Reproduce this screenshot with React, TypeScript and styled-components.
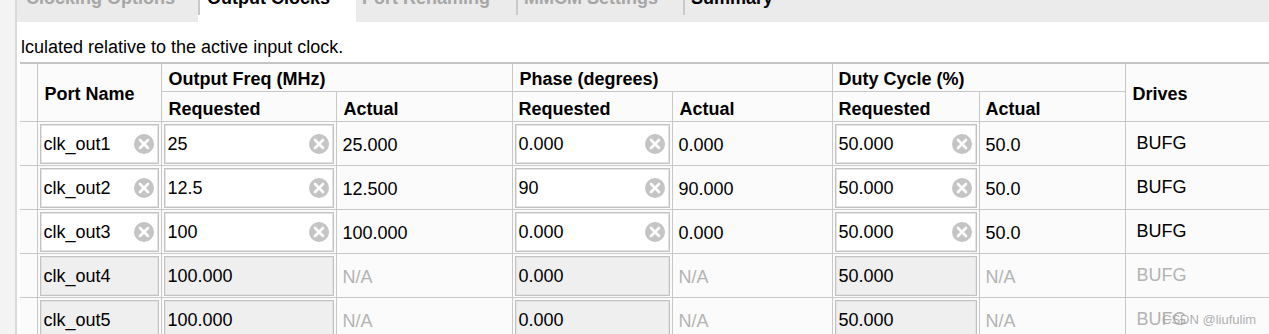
import React from "react";
import styled, { createGlobalStyle } from "styled-components";

const GlobalStyle = createGlobalStyle`
  html, body {
    margin: 0;
    padding: 0;
    background: #ffffff;
    overflow: hidden;
  }
  body {
    font-family: "Liberation Sans", Arial, sans-serif;
    color: #000;
  }
`;

const Page = styled.div`
  display: flex;
  height: 334px;
  width: 1269px;
  overflow: hidden;
`;

const Gutter = styled.div`
  flex: 0 0 15px;
  background: #f3f3f3;
  border-right: 2px solid #d9d9d9;
`;

const Main = styled.div`
  flex: 1;
  min-width: 0;
  overflow: hidden;
  display: flex;
  flex-direction: column;
`;

const TabBar = styled.div`
  display: flex;
  height: 22px;
  background: #ebebeb;
  overflow: hidden;
  flex: 0 0 22px;
`;

const Tab = styled.div<{ $w: number; $active?: boolean; $dark?: boolean; $sep?: boolean; $pl: number }>`
  position: relative;
  flex: 0 0 ${(p) => p.$w}px;
  box-sizing: border-box;
  padding-left: ${(p) => p.$pl}px;
  background: ${(p) => (p.$active ? "#ffffff" : "transparent")};
  font-size: 18px;
  font-weight: bold;
  line-height: 18px;
  white-space: nowrap;
  color: ${(p) => (p.$dark ? "#000000" : "#a6a6a6")};
  &::before {
    content: "";
    display: ${(p) => (p.$sep ? "block" : "none")};
    position: absolute;
    left: 0;
    top: 0;
    width: 2px;
    height: 15px;
    background: #c9c9c9;
  }
`;

const TabLabel = styled.span`
  display: block;
  margin-top: -11px;
`;

const Content = styled.div`
  padding-left: 3px;
  background: #ffffff;
  flex: 1;
`;

const Description = styled.div`
  margin-top: 14px;
  margin-bottom: 4px;
  height: 22px;
  line-height: 22px;
  font-size: 18px;
  padding-left: 1px;
  white-space: nowrap;
`;

const Table = styled.table`
  border-collapse: collapse;
  table-layout: fixed;
  width: 1265px;
  border-top: 2px solid #c4c4c4;
  font-size: 18px;
`;

const HeadRow = styled.tr<{ $h: number }>`
  height: ${(p) => p.$h}px;
`;

const HeadCell = styled.th<{ $pt?: number; $pl?: number }>`
  border: 1px solid #c8c8c8;
  border-top: none;
  background: #fbfbfb;
  text-align: left;
  vertical-align: middle;
  font-weight: bold;
  padding: ${(p) => p.$pt ?? 0}px 0 0 ${(p) => p.$pl ?? 7}px;
  white-space: nowrap;
  overflow: hidden;
  &:first-child {
    border-left: none;
  }
`;

const DataRow = styled.tr`
  height: 44px;
`;

const FieldCell = styled.td`
  border: 1px solid #c8c8c8;
  background: #fbfbfb;
  padding: 2px 2px 1px 2px;
  vertical-align: middle;
`;

const TextCell = styled.td<{ $muted?: boolean; $pl?: number; $pt?: number }>`
  border: 1px solid #c8c8c8;
  background: #fbfbfb;
  padding: ${(p) => p.$pt ?? 5}px 0 0 ${(p) => p.$pl ?? 6}px;
  vertical-align: middle;
  white-space: nowrap;
  color: ${(p) => (p.$muted ? "#b3b3b3" : "#000000")};
  &:first-child {
    border-left: none;
  }
`;

const Field = styled.div<{ $disabled?: boolean }>`
  display: flex;
  align-items: center;
  justify-content: space-between;
  height: 40px;
  box-sizing: border-box;
  border: 1px solid #c2c2c2;
  box-shadow: inset 0 0 0 1px #e4e4e4;
  background: ${(p) => (p.$disabled ? "#efefef" : "#ffffff")};
  padding: 0 4px 0 3px;
  white-space: nowrap;
  overflow: hidden;
`;

const FieldText = styled.span`
  font-size: 18px;
  line-height: 20px;
`;

const ClearIcon = styled.svg`
  flex: 0 0 20px;
  width: 20px;
  height: 20px;
`;

const Watermark = styled.div`
  position: absolute;
  left: 1162px;
  top: 311px;
  font-size: 13px;
  line-height: 18px;
  color: rgba(160, 160, 160, 0.85);
  white-space: nowrap;
  pointer-events: none;
`;

const Root = styled.div`
  position: relative;
`;

const Clear = () => (
  <ClearIcon viewBox="0 0 20 20">
    <circle cx="10" cy="10" r="10" fill="#c4c4c4" />
    <path d="M6 6 L14 14 M14 6 L6 14" stroke="#ffffff" strokeWidth="2.6" strokeLinecap="round" />
  </ClearIcon>
);

type Row = {
  name: string;
  freq: string;
  freqAct: string;
  phase: string;
  phaseAct: string;
  duty: string;
  dutyAct: string;
  enabled: boolean;
};

const rows: Row[] = [
  { name: "clk_out1", freq: "25", freqAct: "25.000", phase: "0.000", phaseAct: "0.000", duty: "50.000", dutyAct: "50.0", enabled: true },
  { name: "clk_out2", freq: "12.5", freqAct: "12.500", phase: "90", phaseAct: "90.000", duty: "50.000", dutyAct: "50.0", enabled: true },
  { name: "clk_out3", freq: "100", freqAct: "100.000", phase: "0.000", phaseAct: "0.000", duty: "50.000", dutyAct: "50.0", enabled: true },
  { name: "clk_out4", freq: "100.000", freqAct: "N/A", phase: "0.000", phaseAct: "N/A", duty: "50.000", dutyAct: "N/A", enabled: false },
  { name: "clk_out5", freq: "100.000", freqAct: "N/A", phase: "0.000", phaseAct: "N/A", duty: "50.000", dutyAct: "N/A", enabled: false },
];

const InputField = ({ value, enabled }: { value: string; enabled: boolean }) => (
  <Field $disabled={!enabled}>
    <FieldText>{value}</FieldText>
    {enabled && <Clear />}
  </Field>
);

const tabs = [
  { label: "Clocking Options", w: 181, pl: 9, dark: false, active: false, sep: false },
  { label: "Output Clocks", w: 158, pl: 9, dark: true, active: true, sep: true },
  { label: "Port Renaming", w: 160, pl: 6, dark: false, active: false, sep: false },
  { label: "MMCM Settings", w: 167, pl: 8, dark: false, active: false, sep: true },
  { label: "Summary", w: 200, pl: 8, dark: true, active: false, sep: true },
];

export default function App() {
  return (
    <Root>
      <GlobalStyle />
      <Page>
        <Gutter />
        <Main>
          <TabBar>
            {tabs.map((t) => (
              <Tab key={t.label} $w={t.w} $pl={t.pl} $dark={t.dark} $active={t.active} $sep={t.sep}>
                <TabLabel>{t.label}</TabLabel>
              </Tab>
            ))}
          </TabBar>
          <Content>
            <Description>lculated relative to the active input clock.</Description>
            <Table>
              <colgroup>
                <col style={{ width: 17 }} />
                <col style={{ width: 124 }} />
                <col style={{ width: 175 }} />
                <col style={{ width: 176 }} />
                <col style={{ width: 160 }} />
                <col style={{ width: 160 }} />
                <col style={{ width: 147 }} />
                <col style={{ width: 146 }} />
                <col style={{ width: 160 }} />
              </colgroup>
              <thead>
                <HeadRow $h={28}>
                  <HeadCell rowSpan={2} />
                  <HeadCell rowSpan={2} $pl={7} $pt={4}>Port Name</HeadCell>
                  <HeadCell colSpan={2} $pl={7} $pt={4}>Output Freq (MHz)</HeadCell>
                  <HeadCell colSpan={2} $pl={7} $pt={4}>Phase (degrees)</HeadCell>
                  <HeadCell colSpan={2} $pl={6} $pt={4}>Duty Cycle (%)</HeadCell>
                  <HeadCell rowSpan={2} $pl={7} $pt={4}>Drives</HeadCell>
                </HeadRow>
                <HeadRow $h={30}>
                  <HeadCell $pl={7} $pt={7}>Requested</HeadCell>
                  <HeadCell $pl={7} $pt={7}>Actual</HeadCell>
                  <HeadCell $pl={6} $pt={7}>Requested</HeadCell>
                  <HeadCell $pl={7} $pt={7}>Actual</HeadCell>
                  <HeadCell $pl={6} $pt={7}>Requested</HeadCell>
                  <HeadCell $pl={6} $pt={7}>Actual</HeadCell>
                </HeadRow>
              </thead>
              <tbody>
                {rows.map((r) => (
                  <DataRow key={r.name}>
                    <TextCell />
                    <FieldCell>
                      <InputField value={r.name} enabled={r.enabled} />
                    </FieldCell>
                    <FieldCell>
                      <InputField value={r.freq} enabled={r.enabled} />
                    </FieldCell>
                    <TextCell $muted={!r.enabled}>{r.freqAct}</TextCell>
                    <FieldCell>
                      <InputField value={r.phase} enabled={r.enabled} />
                    </FieldCell>
                    <TextCell $muted={!r.enabled}>{r.phaseAct}</TextCell>
                    <FieldCell>
                      <InputField value={r.duty} enabled={r.enabled} />
                    </FieldCell>
                    <TextCell $muted={!r.enabled}>{r.dutyAct}</TextCell>
                    <TextCell $muted={!r.enabled} $pl={11} $pt={0}>BUFG</TextCell>
                  </DataRow>
                ))}
              </tbody>
            </Table>
          </Content>
        </Main>
      </Page>
      <Watermark>CSDN @liufulim</Watermark>
    </Root>
  );
}
